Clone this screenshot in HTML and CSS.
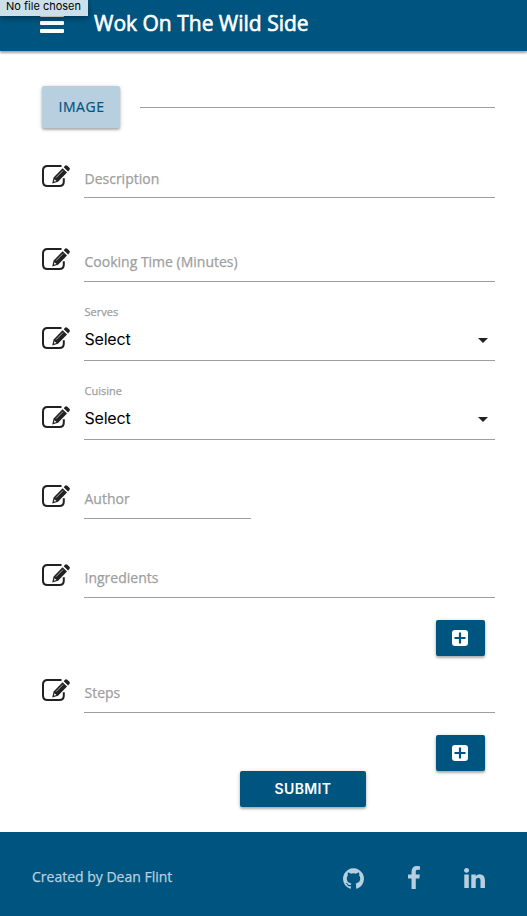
FILE: index.html
```html
<!DOCTYPE html>
<html lang="en">
<head>
<meta charset="utf-8">
<title>Wok On The Wild Side</title>
<link rel="stylesheet" href="styles.css">
</head>
<body>
<svg class="defs" width="0" height="0">
  <symbol id="edit" viewBox="0 0 28 22">
    <path d="M19.500 1H5.500Q1 1 1 5.500V16.500Q1 21 5.500 21H17.300Q21.800 21 21.800 16.500V13.200" fill="none" stroke="#212121" stroke-width="2"/>
    <path d="M10.200 18.500L11.600 12.600L20.600 3.300L25 7.500L16 16.800Z" fill="#212121"/>
    <path d="M21.700 2.200L23.300.6Q24.200-.1 25.300.8L27.400 2.800Q28.300 3.800 27.500 4.800L26.100 6.400Z" fill="#212121"/>
    <path d="M12.400 14.200L14.500 16.100L12 16.800Z" fill="#fff"/>
    <path d="M14 12.700L21 5.600" stroke="#aaa" stroke-width="1"/>
  </symbol>
  <symbol id="plus" viewBox="0 0 16 16">
    <rect width="16" height="16" rx="3" fill="#fff"/>
    <path d="M8 2.500V13.500M2.500 8H13.500" stroke="#005580" stroke-width="2.200"/>
  </symbol>
</svg>
<header class="nav">
  <div class="burger"><i></i><i></i><i></i></div>
  <h1>Wok On The Wild Side</h1>
  <div class="tip">No file chosen</div>
</header>
<main>
  <div class="file"><div class="image-btn">IMAGE</div><div class="file-line"></div></div>
  <div class="field first"><svg class="edit"><use href="#edit"/></svg><div class="control">Description</div></div>
  <div class="field tall"><svg class="edit"><use href="#edit"/></svg><div class="control">Cooking Time (Minutes)</div></div>
  <div class="field"><svg class="edit"><use href="#edit"/></svg><div class="control select"><small>Serves</small><div class="value"><span>Select</span><i class="caret"></i></div></div></div>
  <div class="field"><svg class="edit"><use href="#edit"/></svg><div class="control select"><small>Cuisine</small><div class="value"><span>Select</span><i class="caret"></i></div></div></div>
  <div class="field"><svg class="edit"><use href="#edit"/></svg><div class="control short">Author</div></div>
  <div class="field"><svg class="edit"><use href="#edit"/></svg><div class="control">Ingredients</div></div>
  <div class="add"><svg><use href="#plus"/></svg></div>
  <div class="field steps"><svg class="edit"><use href="#edit"/></svg><div class="control">Steps</div></div>
  <div class="add"><svg><use href="#plus"/></svg></div>
  <div class="submit">SUBMIT</div>
</main>
<footer>
  <span class="credit">Created by Dean Flint</span>
  <svg class="github" viewBox="128 128 1536 1500"><path d="M896 128q209 0 385.500 103t279.500 279.500 103 385.500q0 251-146.500 451.500t-378.500 277.500q-27 5-40-7t-13-30q0-3 .5-76.500t.5-134.500q0-97-52-142 57-6 102.500-18t94-39 81-66.500 53-105 20.500-150.500q0-119-79-206 37-91-8-204-28-9-81 11t-92 44l-38 24q-93-26-192-26t-192 26q-16-11-42.500-27t-83.500-38.500-85-13.500q-45 113-8 204-79 87-79 206 0 85 20.500 150t52.500 105 80.500 67 94 39 102.500 18q-39 36-49 103-21 10-45 15t-57 5-65.500-21.500-55.500-62.500q-19-32-48.500-52t-49.500-24l-20-3q-21 0-29 4.500t-5 11.500 9 14 13 12l7 5q22 10 43.500 38t31.500 51l10 23q13 38 44 61.500t67 30 69.500 7 55.500-3.500l23-4q0 38 .5 88.500t.5 54.500q0 18-13 30t-40 7q-232-77-378.500-277.500t-146.500-451.500q0-209 103-385.500t279.500-279.500 385.500-103z"/></svg>
  <svg class="facebook" viewBox="479 0 864 1664"><path d="M1343 12v264h-157q-86 0-116 36t-30 108v189h293l-39 296h-254v759h-306v-759h-255v-296h255v-218q0-186 104-288.500t277-102.500q147 0 228 12z"/></svg>
  <svg class="linkedin" viewBox="128 148 1536 1468"><path d="M477 625v991h-330v-991h330zm21-306q1 73-50.500 122t-135.500 49h-2q-82 0-132-49t-50-122q0-74 51.500-122.500t134.500-48.500 133 48.500 51 122.500zm1166 729v568h-329v-530q0-105-40.500-164.500t-126.500-59.500q-63 0-105.500 34.500t-63.500 85.500q-11 30-11 81v553h-329q2-399 2-647t-1-296l-1-48h329v144h-2q20-32 41-56t56.500-52 87-43.500 114.500-15.500q171 0 275 113.500t104 332.500z"/></svg>
</footer>
</body>
</html>
```
FILE: styles.css
```css
* { box-sizing: border-box; }
body {
  margin: 0;
  background: #fff;
  font-family: "Open Sans", "Noto Sans", sans-serif;
  font-size: 14px;
  color: #9e9e9e;
}
svg { display: block; flex: none; }
.defs { position: absolute; }
.nav {
  position: relative;
  display: flex;
  height: 51px;
  background: #005580;
  color: #fff;
  box-shadow: 0 2px 2px rgba(0,0,0,.3), 0 1px 4px rgba(0,0,0,.15);
}
.burger {
  display: flex;
  flex-direction: column;
  gap: 4px;
  width: 24px;
  margin: 13px 0 0 39.500px;
}
.burger i { height: 4px; border-radius: 1px; background: #fff; }
h1 {
  margin: 7px 0 0 30.500px;
  font-size: 21px;
  line-height: 32px;
  font-weight: 400;
  -webkit-text-stroke: .6px #fff;
}
.tip {
  position: absolute;
  left: 0;
  top: 0;
  width: 88px;
  height: 16px;
  padding-left: 6px;
  background: #cde0ea;
  color: #000;
  font: 11px/13px Inter, sans-serif;
  white-space: nowrap;
  box-shadow: 0 2px 7px rgba(0,0,0,.4);
}
main {
  display: flex;
  flex-direction: column;
  height: 781px;
  padding: 35px 32px 0 42px;
}
.file { display: flex; gap: 20px; height: 42px; }
.image-btn {
  width: 78px;
  padding-left: 1px;
  background: #b8cfdf;
  color: #005580;
  line-height: 42px;
  text-align: center;
  letter-spacing: .5px;
  -webkit-text-stroke: .2px;
}
.image-btn, .add, .submit {
  border-radius: 2px;
  box-shadow: 0 2px 2px rgba(0,0,0,.2), 0 1px 4px rgba(0,0,0,.22);
}
.file-line { flex: 1; height: 22px; border-bottom: 1px solid #9e9e9e; }
.field { display: flex; align-items: flex-end; gap: 14px; height: 79px; }
.first { height: 70px; }
.tall { height: 84px; }
.edit { width: 28px; height: 22px; margin-bottom: 12px; overflow: visible; }
.first .edit { margin-bottom: 11px; }
.control {
  flex: 1;
  height: 38px;
  padding: 8px 0 0 .5px;
  border-bottom: 1px solid #9e9e9e;
  line-height: 20px;
  -webkit-text-stroke: .25px;
}
.first .control { padding-top: 9px; }
.short { flex: none; width: 167px; }
.control.select { height: 58px; padding: 0 0 0 .5px; }
.select small { display: block; font-size: 11px; line-height: 18px; }
.value {
  display: flex;
  align-items: center;
  justify-content: space-between;
  height: 35px;
  padding-right: 7px;
  color: #000;
  font: 16px Inter, sans-serif;
  letter-spacing: -.2px;
  -webkit-text-stroke: 0;
}
.caret {
  margin-top: 4px;
  border: 5px solid transparent;
  border-top-color: #212121;
  border-bottom: 0;
}
.add {
  display: flex;
  flex: none;
  align-self: flex-end;
  justify-content: center;
  width: 49px;
  height: 36px;
  margin: 22px 10px 0 0;
  padding: 9.500px 1px 0 0;
  background: #005580;
}
.add svg { width: 16px; height: 16px; }
.steps { height: 57px; }
.submit {
  width: 126px;
  height: 36px;
  margin-left: 198px;
  background: #005580;
  color: #fff;
  font: 600 14px/36px Inter, sans-serif;
  letter-spacing: .35px;
  text-align: center;
}
footer {
  display: flex;
  height: 84px;
  padding-left: 32px;
  background: #005580;
  color: #b8cfdf;
  fill: #b8cfdf;
}
.credit { width: 311px; margin-top: 35px; line-height: 20px; -webkit-text-stroke: .25px; }
.github { width: 21px; height: 21px; margin: 36px 44px 0 0; }
.facebook { width: 12px; height: 23px; margin: 34px 44px 0 0; }
.linkedin { width: 21px; height: 20px; margin-top: 36px; }
```
